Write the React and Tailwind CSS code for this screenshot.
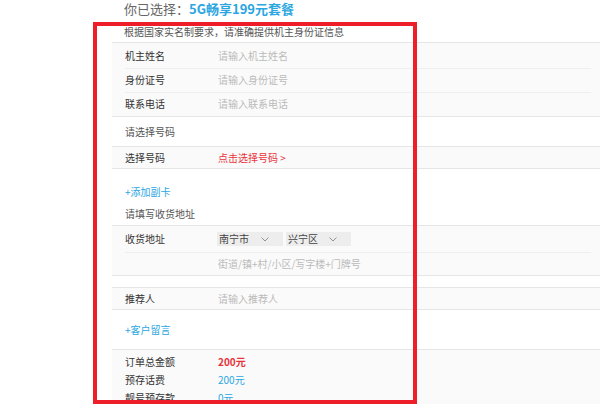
import React from 'react';

const Row = ({ label, children, divider = false, h = 'h-[25px]' }) => (
  <div className={`${h} flex items-center relative`}>
    {divider && <div className="absolute left-[13px] right-[9px] top-0 h-px bg-[#efefef]" />}
    <span className="w-[106px] pl-[13px] text-[#333]">{label}</span>
    <div className="flex items-center">{children}</div>
  </div>
);

const Placeholder = ({ children }) => <span className="text-[#bbb]">{children}</span>;

const Select = ({ value, w = 'w-[66px]' }) => (
  <div className={`${w} h-[14px] bg-[#ededed] flex items-center justify-between pl-[2px] pr-[14px] text-[#444]`}>
    <span>{value}</span>
    <svg width="8" height="5" viewBox="0 0 8 5" fill="none" stroke="#888" strokeWidth="0.9">
      <path d="M0.5 0.5 L4 4 L7.5 0.5" />
    </svg>
  </div>
);

const Panel = ({ children, className = '' }) => (
  <div className={`bg-[#fafafa] border-y border-[#e6e6e6] ${className}`}>{children}</div>
);

const App = () => {
  return (
    <div
      className="relative w-[600px] h-[404px] overflow-hidden bg-white text-[10px] leading-none"
      style={{ fontFamily: '"Noto Sans CJK SC", "Microsoft YaHei", sans-serif' }}
    >
      <div className="pl-[112px]">
        <div className="h-[17px] flex items-center pl-[12px] text-[13px]">
          <span className="text-[#666]">你已选择：</span>
          <span className="text-[#2ba6e1] font-bold">5G畅享199元套餐</span>
        </div>
        <div className="h-[25px] pt-[10px] pl-[12px] text-[#555]">根据国家实名制要求，请准确提供机主身份证信息</div>

        <Panel>
          <Row label="机主姓名"><Placeholder>请输入机主姓名</Placeholder></Row>
          <Row label="身份证号" divider h="h-[24px]"><Placeholder>请输入身份证号</Placeholder></Row>
          <Row label="联系电话" divider h="h-[24px]"><Placeholder>请输入联系电话</Placeholder></Row>
        </Panel>

        <div className="h-[29px] flex items-center pl-[13px] text-[#555]">请选择号码</div>
        <Panel>
          <Row label="选择号码" h="h-[21px]">
            <span className="text-[#e8333a]">点击选择号码 &gt;</span>
          </Row>
        </Panel>

        <div className="h-[23px] mt-[11px] flex items-center pl-[13px] text-[#2ba6e1]">+添加副卡</div>
        <div className="h-[22px] flex items-center pl-[13px] text-[#555]">请填写收货地址</div>

        <Panel>
          <Row label="收货地址" h="h-[26px]">
            <div className="flex gap-[3px] -ml-px">
              <Select value="南宁市" />
              <Select value="兴宁区" w="w-[65px]" />
            </div>
          </Row>
          <Row label="" divider h="h-[23px]"><Placeholder>街道/镇+村/小区/写字楼+门牌号</Placeholder></Row>
        </Panel>

        <Panel className="mt-[11px]">
          <Row label="推荐人" h="h-[21px]"><Placeholder>请输入推荐人</Placeholder></Row>
        </Panel>

        <div className="h-[39px] flex items-center pl-[13px] text-[#2ba6e1]">+客户留言</div>

        <Panel className="pt-[3px] h-[80px]">
          <Row label="订单总金额" h="h-[18px]">
            <span className="text-[#e8333a] font-bold">200元</span>
          </Row>
          <Row label="预存话费" h="h-[18px]">
            <span className="text-[#2ba6e1]">200元</span>
          </Row>
          <Row label="靓号预存款" h="h-[18px]">
            <span className="text-[#2ba6e1]">0元</span>
          </Row>
        </Panel>
      </div>

      <div className="absolute left-[93px] top-[22px] w-[324px] h-[382px] border-4 border-[#ee1d2a] pointer-events-none" />
    </div>
  );
};

export default App;
